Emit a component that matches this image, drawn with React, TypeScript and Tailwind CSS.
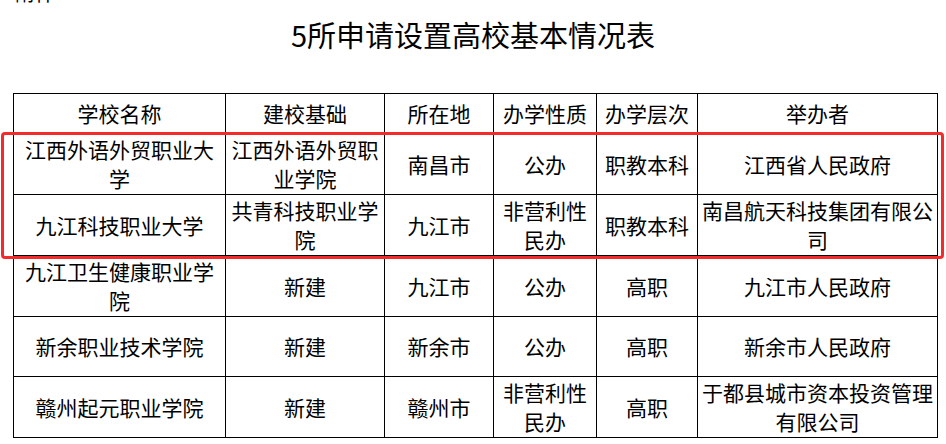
const COLS = "grid-cols-[212px_159px_109px_103px_101px_240px]";

const header = ["学校名称", "建校基础", "所在地", "办学性质", "办学层次", "举办者"];

const rows: { h: string; cells: string[] }[] = [
  {
    h: "h-[61px]",
    cells: ["江西外语外贸职业大学", "江西外语外贸职业学院", "南昌市", "公办", "职教本科", "江西省人民政府"],
  },
  {
    h: "h-[61px]",
    cells: ["九江科技职业大学", "共青科技职业学院", "九江市", "非营利性民办", "职教本科", "南昌航天科技集团有限公司"],
  },
  {
    h: "h-[61px]",
    cells: ["九江卫生健康职业学院", "新建", "九江市", "公办", "高职", "九江市人民政府"],
  },
  {
    h: "h-[60px]",
    cells: ["新余职业技术学院", "新建", "新余市", "公办", "高职", "新余市人民政府"],
  },
  {
    h: "h-[61px]",
    cells: ["赣州起元职业学院", "新建", "赣州市", "非营利性民办", "高职", "于都县城市资本投资管理有限公司"],
  },
];

function Cell({ text, h }: { text: string; h: string }) {
  return (
    <div
      className={`${h} flex items-center justify-center border-r border-b border-black px-[2px] text-center text-[21px] leading-[29px]`}
    >
      {text}
    </div>
  );
}

export default function App() {
  return (
    <div className="relative h-[444px] w-[946px] overflow-hidden bg-white text-black font-['Noto_Sans_CJK_SC','Microsoft_YaHei',sans-serif]">
      {/* 附件 label, mostly cut off at the top edge */}
      <div className="mt-[-17px] pl-[15px] text-[20px] leading-[20px]">附件</div>

      <h1 className="mt-[17px] h-[29px] text-center text-[29px] leading-[29px] font-normal">
        5所申请设置高校基本情况表
      </h1>

      <div className={`ml-[13px] mt-[44px] grid w-[925px] ${COLS} border-l border-t border-black`}>
        {header.map((t) => (
          <Cell key={t} text={t} h="h-[40px]" />
        ))}
        {rows.map((r, i) =>
          r.cells.map((t, j) => <Cell key={`${i}-${j}`} text={t} h={r.h} />)
        )}
      </div>

      {/* red highlight around the first two schools */}
      <div className="pointer-events-none absolute left-[1px] top-[132px] h-[127px] w-[943px] rounded-[4px] border-[3px] border-[#f52a2a]" />
    </div>
  );
}
